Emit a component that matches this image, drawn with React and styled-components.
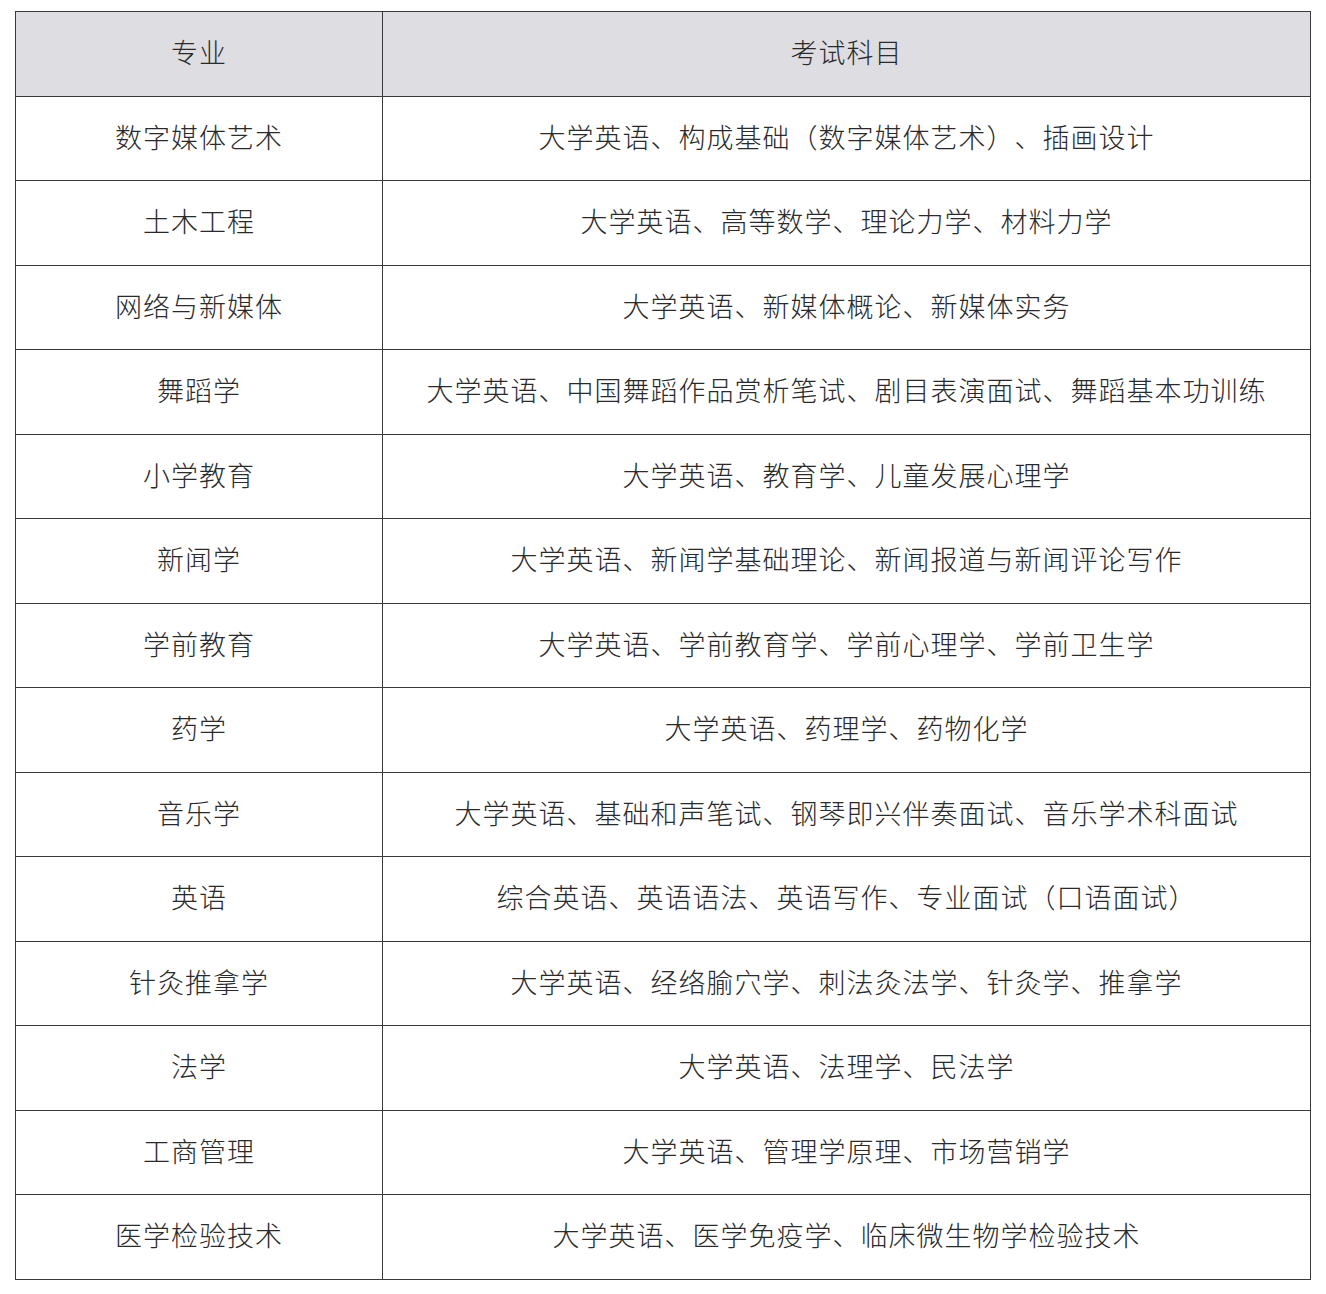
import React from 'react'
import styled, { createGlobalStyle } from 'styled-components'

const rows = [
  ['数字媒体艺术', '大学英语、构成基础（数字媒体艺术）、插画设计'],
  ['土木工程', '大学英语、高等数学、理论力学、材料力学'],
  ['网络与新媒体', '大学英语、新媒体概论、新媒体实务'],
  ['舞蹈学', '大学英语、中国舞蹈作品赏析笔试、剧目表演面试、舞蹈基本功训练'],
  ['小学教育', '大学英语、教育学、儿童发展心理学'],
  ['新闻学', '大学英语、新闻学基础理论、新闻报道与新闻评论写作'],
  ['学前教育', '大学英语、学前教育学、学前心理学、学前卫生学'],
  ['药学', '大学英语、药理学、药物化学'],
  ['音乐学', '大学英语、基础和声笔试、钢琴即兴伴奏面试、音乐学术科面试'],
  ['英语', '综合英语、英语语法、英语写作、专业面试（口语面试）'],
  ['针灸推拿学', '大学英语、经络腧穴学、刺法灸法学、针灸学、推拿学'],
  ['法学', '大学英语、法理学、民法学'],
  ['工商管理', '大学英语、管理学原理、市场营销学'],
  ['医学检验技术', '大学英语、医学免疫学、临床微生物学检验技术'],
]

const Global = createGlobalStyle`
  html, body {
    margin: 0;
    padding: 0;
    background: #fff;
  }
`

const Page = styled.div`
  padding: 11px 0 0 15px;
`

const Table = styled.table`
  width: 1296px;
  border-collapse: collapse;
  font-family: "Noto Sans CJK SC", "Noto Sans", sans-serif;
  font-weight: 300;
  font-size: 27px;
  letter-spacing: 1px;
  color: #2a2a2a;
  text-spacing-trim: space-all;
`

const Cell = styled.td`
  height: 79.5px;
  padding: 0 0 4px;
  border: 1px solid #3a3a3a;
  text-align: center;
  vertical-align: middle;
  font-weight: 300;
  background: ${p => (p.$head ? '#dddde2' : '#fff')};
  width: ${p => (p.$first ? '366px' : 'auto')};
`

export default function App() {
  return (
    <Page>
      <Global />
      <Table>
        <thead>
          <tr>
            <Cell as="th" $head $first>专业</Cell>
            <Cell as="th" $head>考试科目</Cell>
          </tr>
        </thead>
        <tbody>
          {rows.map(([major, subjects]) => (
            <tr key={major}>
              <Cell $first>{major}</Cell>
              <Cell>{subjects}</Cell>
            </tr>
          ))}
        </tbody>
      </Table>
    </Page>
  )
}
